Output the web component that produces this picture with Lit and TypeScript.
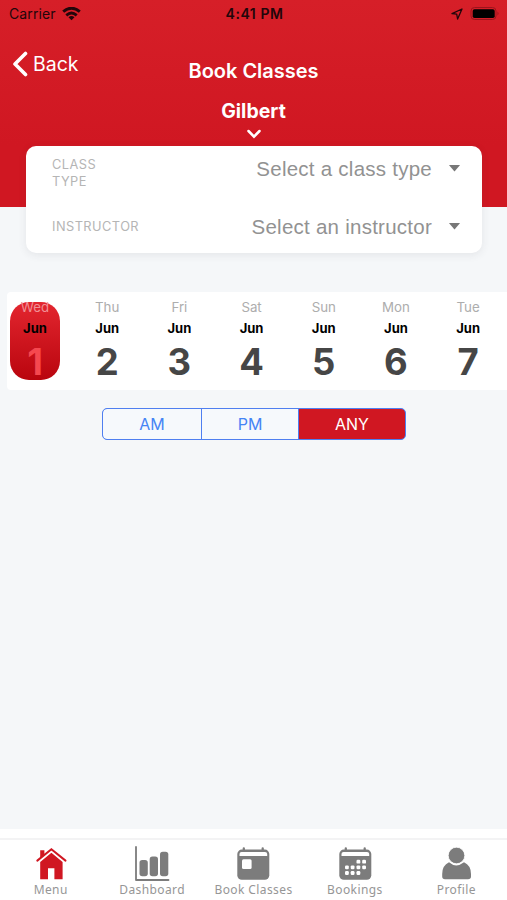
import { LitElement, html, css, svg } from "lit";
import { customElement, property, state } from "lit/decorators.js";
import { classMap } from "lit/directives/class-map.js";

const dots = [
  [21.4, 15.7], [27.1, 15.7],
  [9.9, 21.3], [15.6, 21.3], [21.4, 21.3], [27.1, 21.3],
  [9.9, 27], [15.6, 27], [21.4, 27],
];

const calendarFrame = svg`
  <path d="M8.800 2.400v4M27.700 2.400v4" stroke="currentColor" stroke-width="2.300" stroke-linecap="round"/>
  <rect x="2.300" y="3.600" width="32" height="30.200" rx="4.500" fill="currentColor"/>
  <path d="M4.500 10V8Q4.500 5.900 6.500 5.900H30Q32.200 5.900 32.200 8V10Z" fill="#fff"/>`;

const tabIcons: Record<string, unknown> = {
  menu: svg`
    <path d="M7.200 4.300h4.200v5L7.200 12.500z" fill="currentColor"/>
    <path d="M18.400 6.800L29.600 16V33.200H21.400V22.200H15V33.200H7.200V16Z" fill="currentColor"/>
    <path d="M4.300 14.600L18.400 3.200L32.500 14.600" fill="none" stroke="currentColor" stroke-width="2" stroke-linecap="round"/>`,
  dashboard: svg`
    <path d="M2 1V34H34.500" fill="none" stroke="currentColor" stroke-width="1.800" stroke-linecap="round" stroke-linejoin="round"/>
    <rect x="5.500" y="14" width="8.300" height="16.300" rx="2.800" fill="currentColor"/>
    <rect x="15.700" y="10.600" width="8.300" height="19.700" rx="2.800" fill="currentColor"/>
    <rect x="26" y="5.800" width="8.300" height="24.500" rx="2.800" fill="currentColor"/>`,
  book: svg`${calendarFrame}<rect x="7" y="13.300" width="9.600" height="9.800" rx="1.500" fill="#fff"/>`,
  bookings: svg`${calendarFrame}${dots.map(
    ([x, y]) => svg`<rect x=${x - 1.9} y=${y - 1.9} width="3.800" height="3.800" rx="1.200" fill="#fff"/>`
  )}`,
  profile: svg`
    <path d="M11 16.300Q18 22.500 26 16.300Q33 19.500 33 28V30.500Q33 33.300 30 33.300H7Q4.200 33.300 4.200 30.500V28Q4.200 19.500 11 16.300Z" fill="currentColor"/>
    <circle cx="18.500" cy="9.500" r="8.300" fill="currentColor" stroke="#fff" stroke-width="0.800"/>`,
};

@customElement("status-bar")
class StatusBar extends LitElement {
  static styles = css`
    :host { display: grid; grid-template-columns: 1fr auto 1fr; align-items: center; height: 28px;
      padding: 0 7px 0 9px; color: #22060a; font: 400 14px/28px Inter, sans-serif; box-sizing: border-box; }
    .side { display: flex; align-items: center; gap: 6px; letter-spacing: 0.1px; }
    .right { justify-content: flex-end; gap: 7px; }
    .time { font-weight: 600; font-size: 14px; letter-spacing: 0.55px; }
    svg { display: block; }
  `;
  render() {
    return html`
      <div class="side">
        <span>Carrier</span>
        <svg width="19" height="15" viewBox="0 0 19 15" fill="none" stroke="#22060a" stroke-width="2.900">
          <path d="M1.200 4.700Q9.500 -2.300 17.800 4.700"/>
          <path d="M4.300 8.300Q9.500 3.900 14.700 8.300"/>
          <path d="M9.500 13.200L6.500 10.200Q9.500 7.900 12.500 10.200Z" fill="#22060a" stroke="none"/>
        </svg>
      </div>
      <span class="time">4:41 PM</span>
      <div class="side right">
        <svg width="12" height="12" viewBox="0 0 12 12" fill="none" stroke="#22060a" stroke-width="1.300" stroke-linejoin="round">
          <path d="M11 1L1 5.700L5.700 6.200L6.600 11Z"/>
        </svg>
        <svg width="30" height="14" viewBox="0 0 30 14">
          <rect x="1" y="0.500" width="25" height="12" rx="3.500" fill="none" stroke="#9c141c" stroke-width="1"/>
          <rect x="2.700" y="2.200" width="22" height="8.800" rx="1.800" fill="#000"/>
          <path d="M27.500 4.500Q29.500 6.500 27.500 8.500Z" fill="#9c141c"/>
        </svg>
      </div>`;
  }
}

@customElement("filter-row")
class FilterRow extends LitElement {
  @property() label = "";
  @property() placeholder = "";
  static styles = css`
    :host { display: flex; align-items: flex-start; color: #929292; }
    .label { width: 92px; font: 400 12.800px/17px Inter, sans-serif; letter-spacing: 0.450px; color: #b5b5b5; display: flex; align-items: center; min-height: 25px; }
    .label span { display: block; width: min-content; }
    .value { flex: 1; text-align: right; font: 400 20.500px/25px "Liberation Sans", Arial, sans-serif; letter-spacing: 0.250px; white-space: nowrap; margin: 0 -0.500px 0 0; }
    .caret { width: 12px; height: 7px; margin: 8.500px 0 0 17px; background: #777; clip-path: polygon(0 0, 100% 0, 50% 100%); }
  `;
  render() {
    return html`
      <div class="label"><span>${this.label}</span></div>
      <div class="value">${this.placeholder}</div>
      <div class="caret"></div>`;
  }
}

@customElement("day-strip")
class DayStrip extends LitElement {
  @state() private selected = 1;
  static styles = css`
    :host { display: flex; gap: 22.200px; height: 98px; box-sizing: border-box; margin-left: 6.500px;
      padding: 10px 0 0 3.500px; background: #fff; border-radius: 4px 0 0 4px; overflow: hidden; }
    .day { flex: none; width: 50px; height: 78px; border-radius: 19px; display: flex; flex-direction: column;
      align-items: center; font-family: Inter, sans-serif; }
    .selected { background: linear-gradient(#e3262f, #b9050e); }
    .name { font-size: 13.300px; line-height: 16px; margin-top: -3px; color: #adadad; }
    .month { font-size: 13px; line-height: 16px; font-weight: 700; color: #000; margin-top: 5px; }
    .number { font-size: 36.500px; line-height: 44px; font-weight: 700; color: #464646; margin-top: 4px; }
    .selected .name { color: #f09095; }
    .selected .number { color: #f5484f; }
  `;
  render() {
    return html`${["Wed", "Thu", "Fri", "Sat", "Sun", "Mon", "Tue"].map(
      (name, i) => html`
        <div class=${classMap({ day: true, selected: i + 1 === this.selected })} @click=${() => (this.selected = i + 1)}>
          <span class="name">${name}</span>
          <span class="month">Jun</span>
          <span class="number">${i + 1}</span>
        </div>`
    )}`;
  }
}

@customElement("time-segments")
class TimeSegments extends LitElement {
  @state() private active = "ANY";
  static styles = css`
    :host { display: grid; grid-template-columns: 98px 97px 1fr; width: 304px; height: 32px; box-sizing: border-box;
      border: 1px solid #4f7ff0; border-radius: 5px; background: #4f7ff0; overflow: hidden; }
    .segment { border: 0; padding: 1px 0 0; background: #f6f9fc; color: #4584f5; font: 400 16px/29px Inter, sans-serif; border-left: 1px solid #4f7ff0; }
    .segment:first-child { border-left: 0; border-radius: 4px 0 0 4px; }
    .segment:last-child { border-radius: 0 4px 4px 0; }
    .segment.active { background: #d01722; color: #fff; }
  `;
  render() {
    return html`${["AM", "PM", "ANY"].map(
      (t) => html`<button class=${classMap({ segment: true, active: t === this.active })} @click=${() => (this.active = t)}>${t}</button>`
    )}`;
  }
}

@customElement("tab-bar")
class TabBar extends LitElement {
  static styles = css`
    :host { display: grid; grid-template-columns: repeat(5, 1fr); height: 62px; box-sizing: border-box;
      border-top: 2px solid #f3f3f4; background: #fff; }
    .tab { display: flex; flex-direction: column; align-items: center; padding-top: 6px; color: #7c7c7c; }
    .active { color: #d01722; }
    .label { font: 400 12px/16px "Noto Sans", sans-serif; color: #969696; letter-spacing: 0.400px; white-space: nowrap; }
    svg { display: block; }
  `;
  render() {
    const tabs = [["menu", "Menu"], ["dashboard", "Dashboard"], ["book", "Book Classes"], ["bookings", "Bookings"], ["profile", "Profile"]];
    return html`${tabs.map(
      ([id, label]) => html`
        <div class=${classMap({ tab: true, active: id === "menu" })}>
          <svg width="36" height="36" viewBox="0 0 36 36">${tabIcons[id]}</svg>
          <span class="label">${label}</span>
        </div>`
    )}`;
  }
}

@customElement("app-root")
class AppRoot extends LitElement {
  static styles = css`
    :host { display: flex; flex-direction: column; height: 900px; background: #f5f7f9; overflow: hidden; }
    .header { height: 207px; flex: none; background: linear-gradient(#d61f28, #d01722 70%); color: #fff; font-family: Inter, sans-serif; }
    .nav { display: grid; grid-template-columns: 1fr auto 1fr; height: 61px; }
    .back { display: flex; align-items: center; gap: 5px; height: 28px; margin: 22px 0 0 12px; font-size: 19.500px; line-height: 28px; }
    .title { font-size: 20px; line-height: 26px; font-weight: 600; letter-spacing: -0.020px; margin-top: 30px; }
    .location { display: flex; flex-direction: column; align-items: center; margin-top: 9px; }
    .place { font-size: 19.500px; line-height: 26px; font-weight: 700; }
    .chevron { display: block; margin-top: 5px; }
    .filters { flex: none; height: 107px; box-sizing: border-box; margin: -61px 25.500px 0 26px; padding: 10px 21px 0 26px;
      background: #fff; border-radius: 10px; box-shadow: 0 2px 8px rgba(60, 60, 70, 0.090); display: flex; flex-direction: column; gap: 24px; }
    .filters filter-row { height: 34px; flex: none; }
    .days { flex: none; margin-top: 39px; }
    .segments { flex: none; margin: 18px 0 0 102px; }
    .spacer { flex: 1; }
    .tabs { flex: none; }
    .gap { flex: none; height: 9px; background: #fff; }
  `;
  render() {
    return html`
      <div class="header">
        <status-bar></status-bar>
        <div class="nav">
          <div class="back">
            <svg width="16" height="26" viewBox="0 0 16 26" fill="none" stroke="#fff" stroke-width="3.600" stroke-linecap="round" stroke-linejoin="round">
              <path d="M13.500 2.500L3 13L13.500 23.500"/>
            </svg>
            <span>Back</span>
          </div>
          <div class="title">Book Classes</div>
        </div>
        <div class="location">
          <span class="place">Gilbert</span>
          <svg class="chevron" width="16" height="11" viewBox="0 0 16 11" fill="none" stroke="#fff" stroke-width="2.500" stroke-linecap="round">
            <path d="M2.500 2L8 7.600L13.500 2"/>
          </svg>
        </div>
      </div>
      <div class="filters">
        <filter-row label="CLASS TYPE" placeholder="Select a class type"></filter-row>
        <filter-row label="INSTRUCTOR" placeholder="Select an instructor"></filter-row>
      </div>
      <day-strip class="days"></day-strip>
      <time-segments class="segments"></time-segments>
      <div class="spacer"></div>
      <div class="gap"></div>
      <tab-bar class="tabs"></tab-bar>`;
  }
}
